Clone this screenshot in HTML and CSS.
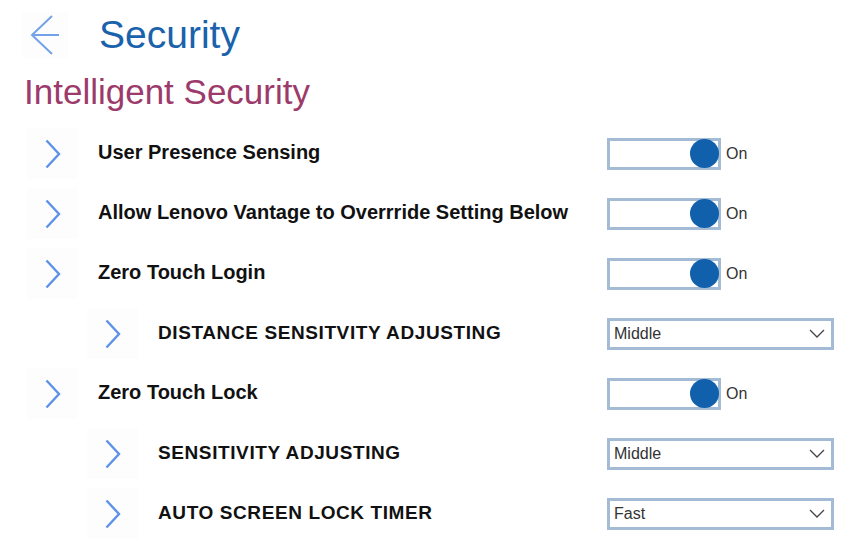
FILE: index.html
```html
<!DOCTYPE html>
<html>
<head>
<meta charset="utf-8">
<link rel="stylesheet" href="styles.css">
</head>
<body>
<div class="page">
  <header class="header">
    <button class="back" aria-label="Back">
      <svg width="30" height="40" viewBox="0 0 30 40"><path d="M22 1 L2 20 L22 39 M2 20 L29 20" fill="none" stroke="#74a2e9" stroke-width="2"/></svg>
    </button>
    <h1 class="title">Security</h1>
  </header>
  <h2 class="subtitle">Intelligent Security</h2>
  <div class="list">
    <div class="row">
      <span class="chev"><svg width="16" height="30" viewBox="0 0 16 30"><path d="M1.5 1.5 L14 15 L1.5 28.5" fill="none" stroke="#5e92e8" stroke-width="2.4"/></svg></span>
      <span class="label">User Presence Sensing</span>
      <div class="ctrl"><span class="toggle"><span class="knob"></span></span><span class="state">On</span></div>
    </div>
    <div class="row">
      <span class="chev"><svg width="16" height="30" viewBox="0 0 16 30"><path d="M1.5 1.5 L14 15 L1.5 28.5" fill="none" stroke="#5e92e8" stroke-width="2.4"/></svg></span>
      <span class="label">Allow Lenovo Vantage to Overrride Setting Below</span>
      <div class="ctrl"><span class="toggle"><span class="knob"></span></span><span class="state">On</span></div>
    </div>
    <div class="row">
      <span class="chev"><svg width="16" height="30" viewBox="0 0 16 30"><path d="M1.5 1.5 L14 15 L1.5 28.5" fill="none" stroke="#5e92e8" stroke-width="2.4"/></svg></span>
      <span class="label">Zero Touch Login</span>
      <div class="ctrl"><span class="toggle"><span class="knob"></span></span><span class="state">On</span></div>
    </div>
    <div class="row sub">
      <span class="chev"><svg width="16" height="30" viewBox="0 0 16 30"><path d="M1.5 1.5 L14 15 L1.5 28.5" fill="none" stroke="#5e92e8" stroke-width="2.4"/></svg></span>
      <span class="label caps">DISTANCE SENSITVITY ADJUSTING</span>
      <div class="ctrl"><div class="select"><span>Middle</span><svg width="16" height="9" viewBox="0 0 16 9"><path d="M1 1 L8 8 L15 1" fill="none" stroke="#444" stroke-width="1.3"/></svg></div></div>
    </div>
    <div class="row">
      <span class="chev"><svg width="16" height="30" viewBox="0 0 16 30"><path d="M1.5 1.5 L14 15 L1.5 28.5" fill="none" stroke="#5e92e8" stroke-width="2.4"/></svg></span>
      <span class="label">Zero Touch Lock</span>
      <div class="ctrl"><span class="toggle"><span class="knob"></span></span><span class="state">On</span></div>
    </div>
    <div class="row sub">
      <span class="chev"><svg width="16" height="30" viewBox="0 0 16 30"><path d="M1.5 1.5 L14 15 L1.5 28.5" fill="none" stroke="#5e92e8" stroke-width="2.4"/></svg></span>
      <span class="label caps">SENSITIVITY ADJUSTING</span>
      <div class="ctrl"><div class="select"><span>Middle</span><svg width="16" height="9" viewBox="0 0 16 9"><path d="M1 1 L8 8 L15 1" fill="none" stroke="#444" stroke-width="1.3"/></svg></div></div>
    </div>
    <div class="row sub">
      <span class="chev"><svg width="16" height="30" viewBox="0 0 16 30"><path d="M1.5 1.5 L14 15 L1.5 28.5" fill="none" stroke="#5e92e8" stroke-width="2.4"/></svg></span>
      <span class="label caps">AUTO SCREEN LOCK TIMER</span>
      <div class="ctrl"><div class="select"><span>Fast</span><svg width="16" height="9" viewBox="0 0 16 9"><path d="M1 1 L8 8 L15 1" fill="none" stroke="#444" stroke-width="1.3"/></svg></div></div>
    </div>
  </div>
</div>
</body>
</html>
```
FILE: styles.css
```css
html, body {
  margin: 0;
  padding: 0;
  background: #ffffff;
  font-family: "Liberation Sans", Arial, sans-serif;
  overflow: hidden;
}

.page {
  width: 857px;
  height: 553px;
}

.header {
  display: flex;
  align-items: center;
  padding: 12px 0 0 22px;
}

.back {
  width: 46px;
  height: 46px;
  border: none;
  padding: 0;
  margin: 0;
  background: #fdfdfd;
  display: flex;
  align-items: center;
  justify-content: center;
}

.title {
  margin: 0 0 0 31px;
  font-size: 39px;
  font-weight: normal;
  color: #1a62ab;
  line-height: 46px;
}

.subtitle {
  margin: 14px 0 0 24px;
  font-size: 35px;
  font-weight: normal;
  color: #9c3b6b;
  line-height: 40px;
  height: 40px;
}

.list {
  margin: 16px 0 0 27px;
  width: 807px;
  display: flex;
  flex-direction: column;
  gap: 9px;
}

.row {
  display: flex;
  align-items: center;
  height: 51px;
}

.row.sub {
  margin-left: 60px;
}

.chev {
  width: 51px;
  height: 51px;
  flex: none;
  background: #fdfdfd;
  display: flex;
  align-items: center;
  justify-content: center;
}

.label {
  flex: 1;
  padding-left: 20px;
  font-size: 20px;
  font-weight: bold;
  color: #111;
  margin-top: -3px;
}

.label.caps {
  font-size: 19px;
  letter-spacing: 0.6px;
  margin-top: -2px;
}

.ctrl {
  width: 227px;
  flex: none;
  display: flex;
  align-items: center;
}

.toggle {
  box-sizing: border-box;
  width: 114px;
  height: 32px;
  border: 3px solid #a3bbd5;
  display: flex;
  align-items: center;
  justify-content: flex-end;
}

.knob {
  width: 29px;
  height: 29px;
  border-radius: 50%;
  background: #1160ab;
  margin-right: -1px;
}

.state {
  margin-left: 5px;
  font-size: 16px;
  color: #333;
}

.select {
  box-sizing: border-box;
  width: 227px;
  height: 32px;
  border: 3px solid #a3bbd5;
  display: flex;
  align-items: center;
  justify-content: space-between;
  padding: 0 6px 0 4px;
  font-size: 16px;
  color: #333;
}
```
